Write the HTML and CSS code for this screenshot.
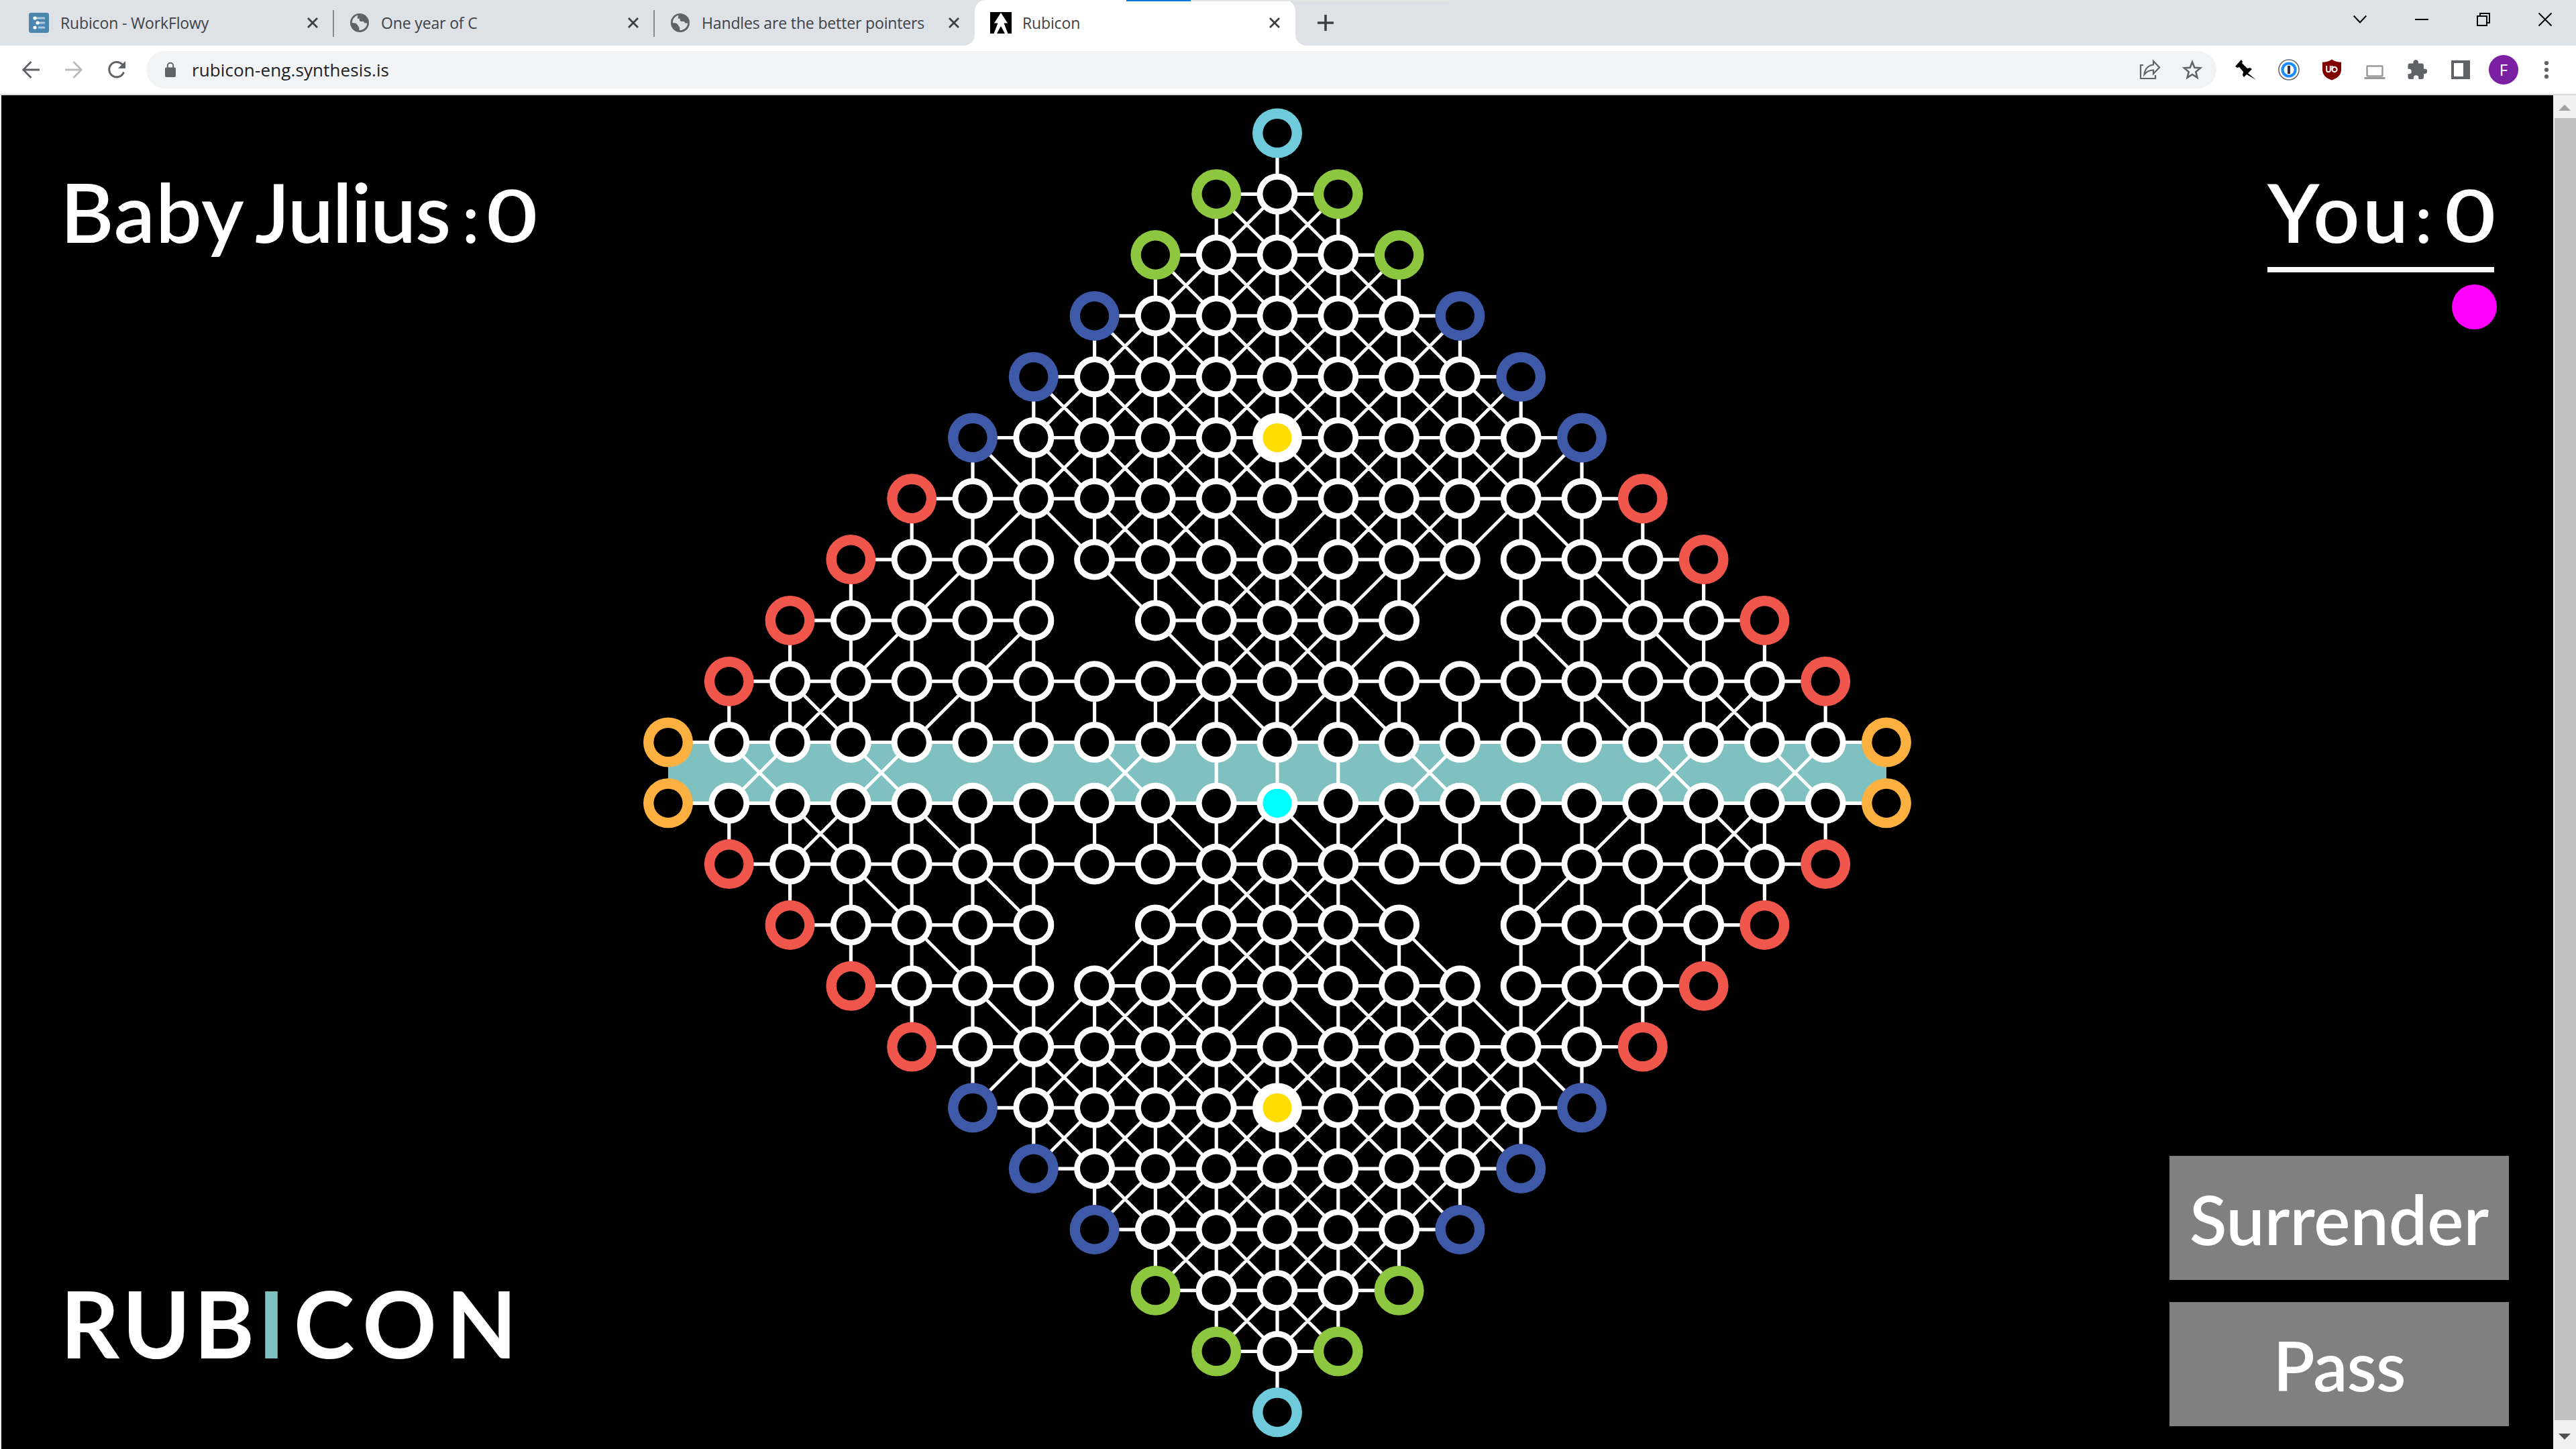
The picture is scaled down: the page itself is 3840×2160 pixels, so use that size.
FILE: index.html
```html
<!DOCTYPE html>
<html lang="en">
<head>
<meta charset="utf-8">
<title>Rubicon</title>
<link rel="stylesheet" href="styles.css">
</head>
<body>
<svg class="defs" width="0" height="0" aria-hidden="true">
  <symbol id="i-close" viewBox="0 0 16 16"><path d="M1 1l14 14M15 1L1 15" fill="none" stroke="#3c4043" stroke-width="2.8"/></symbol>
  <symbol id="i-globe" viewBox="0 0 28 28">
    <circle cx="14" cy="14" r="14" fill="#5f6368"/>
    <path d="M11.5 2.8C6.500 4 2.800 8.600 2.800 14l6.200 1.200 2 2.300v3.300h2.300v4.400C19.800 25.200 25 20.500 25.200 14.500h-3.600l-1.800-2.400h-4.600l-1.500-1.700V7.800h-2.900V5.400z" fill="#dee1e6"/>
    <path d="M14.500 3c-1 2 .5 3 2.500 3v3h3v3h4.500C24 7 20 3 14.500 3zM3 14.500h4.500l5 5V25C7 24.500 3 20 3 14.500z" fill="#5f6368"/>
  </symbol>
</svg>

<header class="browser">
  <div class="tabstrip">
    <div class="tab">
      <svg class="fav" viewBox="0 0 32 32"><rect x="1" y="1" width="30" height="30" rx="3" fill="#4b86ae"/><path d="M11 9h14M15 16h10M15 23h10" stroke="#a9c9dd" stroke-width="3"/><g fill="#fff"><circle cx="10" cy="9" r="2.600"/><circle cx="14" cy="16" r="2.600"/><circle cx="10" cy="23" r="2.600"/></g></svg>
      <span class="title">Rubicon - WorkFlowy</span>
      <svg class="x"><use href="#i-close"/></svg>
    </div>
    <div class="tab">
      <svg class="fav globe"><use href="#i-globe"/></svg>
      <span class="title">One year of C</span>
      <svg class="x"><use href="#i-close"/></svg>
    </div>
    <div class="tab last">
      <svg class="fav globe"><use href="#i-globe"/></svg>
      <span class="title">Handles are the better pointers</span>
      <svg class="x"><use href="#i-close"/></svg>
    </div>
    <div class="tab active">
      <svg class="fav" viewBox="0 0 32 32"><path d="M0 0h32v32H0z"/><path d="M16 1l10 15.500h-5.500L26.500 32H22l-6-11-6 11H5.500l6-15.500H6z" fill="#fff"/></svg>
      <span class="title">Rubicon</span>
      <svg class="x"><use href="#i-close"/></svg>
    </div>
    <svg class="newtab" viewBox="0 0 24 24"><path d="M12 0v24M0 12h24" stroke="#3c4043" stroke-width="3.600"/></svg>
    <div class="wincontrols">
      <svg viewBox="0 0 20 20"><path d="M.7 4.500L10 14.500l9.300-10" fill="none" stroke="#000" stroke-width="2"/></svg>
      <svg viewBox="0 0 20 20"><path d="M0 10h20" stroke="#000" stroke-width="2"/></svg>
      <svg viewBox="0 0 20 20"><path d="M1 5h14v14H1zM5 5V1h14v14h-4" fill="none" stroke="#000" stroke-width="2"/></svg>
      <svg viewBox="0 0 20 20"><path d="M.5.5l19 19M19.500.5l-19 19" stroke="#000" stroke-width="2"/></svg>
    </div>
    <div class="progress"><i></i></div>
  </div>
  <div class="toolbar">
    <div class="nav">
      <svg viewBox="0 0 32 32"><path d="M29 16H5M16.500 4L4.700 16l11.800 12" fill="none" stroke="#5f6368" stroke-width="2.800"/></svg>
      <svg viewBox="0 0 32 32"><path d="M3 16h24M15.500 4l11.800 12-11.800 12" fill="none" stroke="#babcbe" stroke-width="2.800"/></svg>
      <svg viewBox="0 0 32 32"><path d="M26.500 19.500A11.200 11.200 0 1 1 24 7.800l2 2" fill="none" stroke="#5f6368" stroke-width="3"/><path d="M29 3v11H18z" fill="#5f6368"/></svg>
    </div>
    <div class="omnibox">
      <svg class="lock" viewBox="0 0 16 22"><rect y="7.500" width="16" height="14.500" rx="2" fill="#5f6368"/><path d="M3.800 8V5a4.200 4.200 0 0 1 8.400 0v3" fill="none" stroke="#5f6368" stroke-width="2"/></svg>
      <span class="url">rubicon-eng.synthesis.is</span>
      <svg viewBox="0 0 32 32"><path d="M6 9H2v20h22v-5M21 3l9 9.500-9 9.500v-5.500c-6 0-10 2-13.500 6.500C8.500 15 13 9.500 21 8.500z" fill="none" stroke="#5f6368" stroke-width="2.200"/></svg>
      <svg viewBox="0 0 32 32"><path d="M16 4.500l3.300 8.200 8.700.7-6.700 5.700 2.100 8.600L16 23l-7.400 4.700 2.100-8.600L4 13.400l8.700-.7z" fill="none" stroke="#5f6368" stroke-width="2.600"/></svg>
    </div>
    <div class="extensions">
      <svg viewBox="0 0 32 32"><path d="M0 11L9 1l2 3-1 2 8 8 4-1 3 2-6 6 12 10-14-8-4 4-2-3 1-5-6-7-3 1z"/></svg>
      <svg viewBox="0 0 32 32"><circle cx="16" cy="16" r="15" fill="#fff" stroke="#6b6b6b" stroke-width="1.600"/><circle cx="16" cy="16" r="9.600" fill="#fff" stroke="#1a8cff" stroke-width="4"/><path d="M16 10v12" stroke="#333" stroke-width="4"/></svg>
      <svg viewBox="0 0 32 32"><path d="M16 .5c4 3 9 4 14 4.200V16c0 8-6 12.500-14 15.500C8 28.500 2 24 2 16V4.700C7 4.500 12 3.500 16 .5z" fill="#800000"/><path d="M8.200 10v6.500a2.800 2.800 0 0 0 5.600 0V10M16.400 10v6" fill="none" stroke="#fff" stroke-width="2"/><circle cx="20" cy="15.500" r="3.600" fill="none" stroke="#fff" stroke-width="2.200"/></svg>
      <svg viewBox="0 0 32 32"><rect x="4.500" y="10.500" width="23" height="15" rx="1" fill="none" stroke="#999" stroke-width="2.400"/><path d="M.5 28.500h31" stroke="#999" stroke-width="3"/></svg>
      <svg viewBox="0 0 32 32"><path d="M1.500 9.500A3 3 0 0 1 4.500 6.500h5V5a3.700 3.700 0 0 1 7.400 0v1.500h5a3 3 0 0 1 3 3v5h1.500a3.700 3.700 0 0 1 0 7.400H25v5a3 3 0 0 1-3 3h-4.600V28a3.800 3.800 0 0 0-7.600 0v1.900H4.500a3 3 0 0 1-3-3v-4.600H3a3.800 3.800 0 0 0 0-7.600H1.500z" fill="#5f6368"/></svg>
      <svg viewBox="0 0 32 32"><path d="M2 2h28v28H2zM6 6v20h14V6z" fill="#5f6368" fill-rule="evenodd"/></svg>
      <span class="avatar">F</span>
      <svg viewBox="0 0 32 32"><g fill="#5f6368"><circle cx="16" cy="6" r="3.100"/><circle cx="16" cy="16" r="3.100"/><circle cx="16" cy="26" r="3.100"/></g></svg>
    </div>
  </div>
</header>

<main class="viewport">
  <div class="game">
    <section class="side left">
      <div class="score"><span class="baby">Baby</span><span class="julius">Julius</span><span class="colon">:</span><span class="points">0</span></div>
      <div class="logo">RUB<span class="river">I</span><span class="end">CON</span></div>
    </section>
    <svg class="board" viewBox="950 142 1908 2018"></svg>
    <section class="side right">
      <div>
        <div class="score"><span class="you">You</span><span class="colon">:</span><span class="points">0</span></div>
        <div class="turn"></div>
        <div class="stone"></div>
      </div>
      <div class="actions">
        <button>Surrender</button>
        <button class="pass">Pass</button>
      </div>
    </section>
  </div>
  <div class="scrollbar">
    <svg viewBox="0 0 18 9"><path d="M9 0l9 9H0z" fill="#a3a3a3"/></svg>
    <div class="thumb"></div>
    <svg viewBox="0 0 18 9"><path d="M9 9l9-9H0z" fill="#505050"/></svg>
  </div>
</main>
<script src="board.js"></script>
</body>
</html>
```
FILE: styles.css
```css
* { box-sizing: border-box; }
body { margin: 0; width: 3840px; height: 2160px; overflow: hidden; background: #fff; font-family: "Open Sans", "Noto Sans", sans-serif; }
svg { display: block; flex: none; }
.defs { position: absolute; }

.browser { height: 142px; border-bottom: 2px solid #dadcdf; }
.tabstrip { position: relative; display: flex; height: 68px; padding-left: 19px; background: #dee1e6; }
.tab { position: relative; display: flex; align-items: center; width: 478px; height: 68px; padding: 0 23px; }
.tab:not(.active):not(.last)::after { content: ""; position: absolute; right: -1px; top: 15px; width: 2px; height: 40px; background: #85888c; }
.fav { width: 32px; height: 32px; margin-right: 16px; }
.fav.globe { width: 28px; height: 28px; margin: 0 18px 0 2px; }
.title { flex: 1; font-size: 23px; line-height: 34px; letter-spacing: -0.15px; color: #3f4246; white-space: nowrap; }
.x { width: 16px; height: 16px; }
.active { background: #fff; border-radius: 16px 16px 0 0; }
.active::before, .active::after { content: ""; position: absolute; bottom: 0; width: 16px; height: 16px; }
.active::before { left: -16px; background: radial-gradient(circle at 0 0, transparent 15.5px, #fff 16px); }
.active::after { right: -16px; background: radial-gradient(circle at 100% 0, transparent 15.5px, #fff 16px); }
.newtab { width: 24px; height: 24px; margin: 22px 0 0 33px; }
.wincontrols { display: flex; margin-left: auto; height: 58px; }
.wincontrols svg { width: 92px; height: 20px; margin-top: 19px; }
.progress { position: absolute; left: 1679px; top: 0; width: 480px; height: 2px; background: #e5e5e5; }
.progress i { display: block; width: 96px; height: 2px; background: #0078d7; }

.toolbar { display: flex; align-items: center; height: 72px; padding-left: 30px; }
.toolbar svg { width: 32px; height: 32px; }
.nav { display: flex; gap: 32px; width: 188px; }
.omnibox { display: flex; align-items: center; width: 3086px; height: 56px; padding: 0 20px 0 28px; border-radius: 28px; background: #f1f3f4; }
.omnibox .lock { width: 16px; height: 22px; }
.url { flex: 1; margin-left: 24px; font-size: 26px; line-height: 36px; letter-spacing: 0.12px; color: #202124; }
.omnibox svg:last-child { margin-left: 31px; }
.extensions { display: flex; align-items: center; gap: 32px; margin-left: 28px; }
.avatar { width: 44px; height: 44px; margin: 0 -6px; border-radius: 50%; background: #7b1fa2; color: #fff; font-size: 24px; line-height: 44px; text-align: center; }

.viewport { display: flex; height: 2018px; border-left: 2px solid #eceff1; background: #000; }
.game { display: flex; width: 3804px; color: #fff; font-family: Lato, "Open Sans", sans-serif; font-weight: 600; }
.side { display: flex; flex-direction: column; justify-content: space-between; padding-top: 123px; }
.left { width: 948px; padding-left: 88px; padding-bottom: 130px; }
.board { width: 1908px; height: 2018px; }
.score { display: flex; height: 100px; font-size: 122px; line-height: 100px; }
.baby { width: 290px; letter-spacing: 1px; }
.julius { width: 309px; letter-spacing: -1.6px; }
.colon { width: 36px; font-size: 100px; line-height: 116px; }
.points { font-size: 108px; line-height: 108px; transform: scaleX(1.22); transform-origin: 0 0; }
.left .points { transform: scaleX(1.22); }
.logo { font-size: 137px; line-height: 116px; font-weight: 700; letter-spacing: 5px; }
.river { color: #7ec1c0; letter-spacing: 13px; }
.end { letter-spacing: 14px; }
.right { width: 948px; padding-left: 376px; padding-bottom: 34px; }
.you { width: 220px; margin-left: 146px; letter-spacing: 4px; }
.right .colon { width: 44px; }
.turn { width: 338px; height: 8px; margin: 33px 0 0 146px; background: #fff; }
.stone { width: 67px; height: 67px; margin: 18px 0 0 421px; border-radius: 50%; background: #f0f; }
.actions { display: flex; flex-direction: column; gap: 33px; }
.actions button { width: 506px; height: 185px; padding: 2px 0 0; border: 0; background: #808080; color: #fff; font: 600 102px/183px Lato, "Open Sans", sans-serif; text-align: center; }
.actions .pass { letter-spacing: -1px; }

.scrollbar { display: flex; flex-direction: column; width: 34px; padding: 14px 0; background: #f1f1f1; }
.scrollbar svg { width: 18px; height: 9px; margin-left: 8px; }
.thumb { width: 32px; height: 1942px; margin: 11px 0 20px 2px; background: #c1c1c1; }
```
FILE: board.js
```js
// The board is a lattice of 22 rows, symmetric about both axes.
// Rows 0-10 are the upper half; columns run outwards from 0.
const STEP = 90.8, CX = 1904, TOP = 198.5, ROWS = 22;
const EDGE = ['#6fcbdc', '#8dc63f', '#8dc63f', '#3e59a7', '#3e59a7', '#3e59a7',
  '#f1564c', '#f1564c', '#f1564c', '#f1564c', '#fbb040'];

// Diagonals below each row, listed by outer column k of the cell (k, k-1) on the left side:
// "\" falls towards the centre, "/" falls away from it, "X" is both.
const DIAGONALS = [
  {},
  { 1: 'X' },
  { 1: 'X', 2: 'X' },
  { 1: 'X', 2: 'X', 3: 'X' },
  { 1: 'X', 2: 'X', 3: 'X', 4: 'X' },
  { 1: 'X', 2: 'X', 3: 'X', 4: 'X', 5: '\\' },
  { 1: '\\', 2: 'X', 3: 'X', 4: '\\', 5: '/' },
  { 1: 'X', 2: '\\', 3: '\\', 6: '/' },
  { 1: 'X', 2: '\\', 5: '/', 7: '/' },
  { 1: '\\', 2: '/', 6: '/', 8: 'X' },
  { 3: 'X', 7: 'X', 9: 'X' }
];

const half = r => Math.min(r, ROWS - 1 - r);
const exists = (r, c) => Math.abs(c) <= half(r) && !(half(r) === 8 && Math.abs(c) === 3);
const x = c => CX + c * STEP;
const y = r => TOP + r * STEP;
const line = (r1, c1, r2, c2) => `M${x(c1).toFixed(1)} ${y(r1).toFixed(1)}L${x(c2).toFixed(1)} ${y(r2).toFixed(1)}`;

let straight = '', diagonal = '', nodes = '';
for (let r = 0; r < ROWS; r++) {
  const h = half(r);
  for (let c = -h; c <= h; c++) {
    if (!exists(r, c)) continue;
    const a = Math.abs(c);

    const wall = h === 7 && (c === -4 || c === 3);
    if (exists(r, c + 1) && !wall) straight += line(r, c, r, c + 1);

    if (r < ROWS - 1 && exists(r + 1, c)) {
      const upper = Math.min(h, half(r + 1));
      const blocked = (r === 10 && a > 1) || (upper === 8 && r !== 10 && a === 2);
      if (!blocked) straight += line(r, c, r + 1, c);
    }

    const outer = a === h;
    const gold = h === 5 && c === 0;
    const colour = outer ? EDGE[h] : '#fff';
    const fill = gold ? '#ffdd00' : (r === 11 && c === 0 ? '#00ffff' : '#000');
    const radius = outer || gold ? 37 : 30.5;
    nodes += `<circle cx="${x(c)}" cy="${y(r)}" r="${radius}" fill="${colour}"/>` +
      `<circle cx="${x(c)}" cy="${y(r)}" r="21.6" fill="${fill}"/>`;
  }
}
DIAGONALS.forEach((cells, r) => {
  const ends = r === 10 ? [[10, 11]] : [[r, r + 1], [ROWS - 1 - r, ROWS - 2 - r]];
  for (const [k, kind] of Object.entries(cells)) {
    for (const [near, far] of ends) for (const s of [-1, 1]) {
      if (kind !== '/') diagonal += line(near, s * k, far, s * (k - 1));
      if (kind !== '\\') diagonal += line(near, s * (k - 1), far, s * k);
    }
  }
});

document.querySelector('.board').innerHTML =
  `<rect x="${x(-10)}" y="${y(10)}" width="${20 * STEP}" height="${STEP}" fill="#7ec1c0"/>` +
  `<path d="${diagonal}" stroke="#fff" stroke-width="4.8"/>` +
  `<path d="${straight}" stroke="#fff" stroke-width="5.2"/>` + nodes;
```
